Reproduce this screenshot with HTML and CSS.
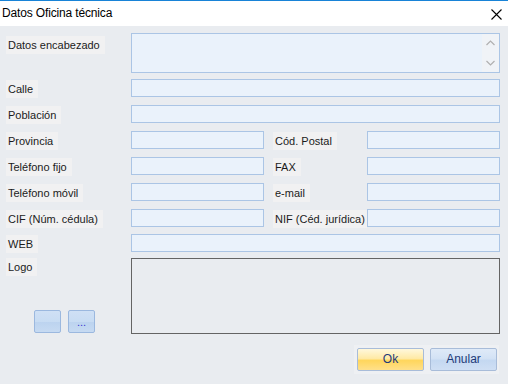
FILE: index.html
```html
<!DOCTYPE html>
<html>
<head>
<meta charset="utf-8">
<link rel="stylesheet" href="styles.css">
</head>
<body>
<div class="window">
  <div class="titlebar">
    <span class="title">Datos Oficina técnica</span>
    <svg class="close" width="11" height="11" viewBox="0 0 11 11"><path d="M0.5 0.5L10.5 10.5M10.5 0.5L0.5 10.5" stroke="#000" stroke-width="1.1" fill="none"/></svg>
  </div>
  <div class="content">
    <div class="row row-area">
      <div class="lcol"><span class="lbl">Datos encabezado</span></div>
      <div class="textarea">
        <div class="scroll">
          <svg width="9" height="6" viewBox="0 0 9 6"><path d="M0.5 5L4.5 1L8.5 5" stroke="#b0b0b0" stroke-width="1.2" fill="none"/></svg>
          <svg width="9" height="6" viewBox="0 0 9 6"><path d="M0.5 1L4.5 5L8.5 1" stroke="#b0b0b0" stroke-width="1.2" fill="none"/></svg>
        </div>
      </div>
    </div>
    <div class="row first">
      <div class="lcol"><span class="lbl">Calle</span></div>
      <div class="input full"></div>
    </div>
    <div class="row">
      <div class="lcol"><span class="lbl">Población</span></div>
      <div class="input full"></div>
    </div>
    <div class="row">
      <div class="lcol"><span class="lbl">Provincia</span></div>
      <div class="input half"></div>
      <div class="rcol"><span class="lbl">Cód. Postal</span></div>
      <div class="input half"></div>
    </div>
    <div class="row">
      <div class="lcol"><span class="lbl">Teléfono fijo</span></div>
      <div class="input half"></div>
      <div class="rcol"><span class="lbl">FAX</span></div>
      <div class="input half"></div>
    </div>
    <div class="row">
      <div class="lcol"><span class="lbl">Teléfono móvil</span></div>
      <div class="input half"></div>
      <div class="rcol"><span class="lbl">e-mail</span></div>
      <div class="input half"></div>
    </div>
    <div class="row">
      <div class="lcol"><span class="lbl">CIF (Núm. cédula)</span></div>
      <div class="input half"></div>
      <div class="rcol"><span class="lbl over">NIF (Céd. jurídica)</span></div>
      <div class="input half"></div>
    </div>
    <div class="row web">
      <div class="lcol"><span class="lbl">WEB</span></div>
      <div class="input full"></div>
    </div>
    <div class="row row-logo">
      <div class="lcol logo-col">
        <span class="lbl">Logo</span>
        <div class="smallbtns">
          <div class="sbtn"></div>
          <div class="sbtn">...</div>
        </div>
      </div>
      <div class="logo"></div>
    </div>
    <div class="footer">
      <div class="panel">
        <div class="btn ok">Ok</div>
        <div class="btn cancel">Anular</div>
      </div>
    </div>
  </div>
</div>
</body>
</html>
```
FILE: styles.css
```css
* { box-sizing: border-box; }
html, body { margin: 0; padding: 0; }
body {
  width: 508px;
  height: 384px;
  overflow: hidden;
  font-family: "Liberation Sans", Arial, sans-serif;
  background: #e9ecf0;
}
.window {
  width: 508px;
  height: 384px;
  display: flex;
  flex-direction: column;
}
.titlebar {
  height: 26px;
  background: #ffffff;
  border-top: 1px solid #1883d7;
  display: flex;
  align-items: center;
  justify-content: space-between;
  padding: 0 6px 0 2px;
}
.title {
  font-size: 12px;
  color: #000;
  margin-top: -1px;
  letter-spacing: -0.15px;
}
.close { margin-top: 1px; }
.content {
  flex: 1;
  background: #e9ecf0;
  padding: 7px 8px 0 6px;
  display: flex;
  flex-direction: column;
}
.row {
  display: flex;
  height: 18px;
  margin-top: 8px;
}
.row.first { margin-top: 6px; }
.row.web { margin-top: 7px; }
.row-area { height: 40px; margin-top: 0; }
.row-logo { height: 76px; margin-top: 6px; }
.lcol {
  width: 125px;
  flex: none;
}
.row-area .lcol { padding-top: 2px; }
.rcol {
  width: 94px;
  margin-left: 9px;
  flex: none;
  position: relative;
}
.lbl {
  display: inline-block;
  background: #f1f1f2;
  font-size: 11px;
  line-height: 18px;
  height: 18px;
  padding: 0 5px 0 2px;
  color: #1b1b1b;
  white-space: nowrap;
}
.lbl.over { position: relative; z-index: 1; padding-right: 2px; }
.input {
  height: 18px;
  background: #eaf2fb;
  border: 1px solid #abc5e5;
}
.input.full { width: 369px; }
.input.half { width: 133px; }
.textarea {
  width: 369px;
  height: 40px;
  background: #eaf2fb;
  border: 1px solid #abc5e5;
  display: flex;
  justify-content: flex-end;
}
.scroll {
  width: 17px;
  background: #f0f3f7;
  display: flex;
  flex-direction: column;
  align-items: center;
  justify-content: space-between;
  padding: 6px 0 6px;
}
.logo-col {
  display: flex;
  flex-direction: column;
  justify-content: space-between;
  align-items: flex-start;
}
.smallbtns {
  display: flex;
  gap: 7px;
  margin-left: 28px;
  margin-bottom: 1px;
}
.sbtn {
  width: 27px;
  height: 23px;
  border: 1px solid #9bb8df;
  border-radius: 2px;
  background: linear-gradient(#cfe0f5 0%, #c8dcf3 50%, #bcd3ef 52%, #c6daf2 100%);
  font-size: 11px;
  color: #3a3ad0;
  text-align: center;
  line-height: 22px;
}
.logo {
  width: 369px;
  height: 76px;
  border: 1px solid #646464;
  background: #e9ecf0;
}
.footer {
  display: flex;
  justify-content: flex-end;
  margin-top: 11px;
  padding-right: 1px;
}
.panel {
  display: flex;
  gap: 6px;
  padding: 3px 2px 3px 3px;
  background: #eef0f3;
}
.btn {
  width: 67px;
  height: 23px;
  border: 1px solid #a8bcd9;
  border-radius: 2px;
  font-size: 12px;
  text-align: center;
  line-height: 21px;
  color: #1e3a78;
}
.btn.ok {
  background: linear-gradient(#fff8dc 0%, #ffeaa6 45%, #ffd65c 55%, #ffe08a 100%);
}
.btn.cancel {
  background: linear-gradient(#dfeaf8 0%, #d3e2f5 45%, #c4d8f1 55%, #cfdff4 100%);
}
```
